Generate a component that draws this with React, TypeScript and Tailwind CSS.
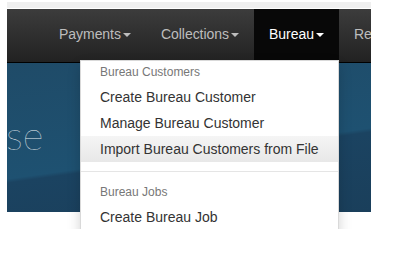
import React from 'react';

const navItems = [
  { label: 'Payments', caret: true, active: false },
  { label: 'Collections', caret: true, active: false },
  { label: 'Bureau', caret: true, active: true },
  { label: 'Reports', caret: true, active: false },
];

type MenuRow =
  | { kind: 'header'; text: string }
  | { kind: 'item'; text: string; hover?: boolean }
  | { kind: 'divider' };

const bureauMenu: MenuRow[] = [
  { kind: 'header', text: 'Bureau Customers' },
  { kind: 'item', text: 'Create Bureau Customer' },
  { kind: 'item', text: 'Manage Bureau Customer' },
  { kind: 'item', text: 'Import Bureau Customers from File', hover: true },
  { kind: 'divider' },
  { kind: 'header', text: 'Bureau Jobs' },
  { kind: 'item', text: 'Create Bureau Job' },
  { kind: 'item', text: 'Manage Bureau Jobs' },
];

function Caret() {
  return (
    <span className="ml-[2px] inline-block h-0 w-0 border-x-[4px] border-t-[4px] border-x-transparent border-t-current align-middle" />
  );
}

export default function App() {
  return (
    <div className="h-[257px] w-[395px] bg-white pl-[7px] pt-[2px] font-['Liberation_Sans',Arial,sans-serif]">
      <div className="relative h-[227px] w-[364px] overflow-hidden">
        {/* strip of the header above, mostly scrolled away */}
        <div className="h-[6px] bg-[#efefef]" />
        <div className="h-px bg-white" />

        <nav className="flex h-[54px] border-b border-black bg-gradient-to-b from-[#3c3c3c] to-[#222222] pl-[37px]">
          {navItems.map((item) => (
            <div
              key={item.label}
              className={
                'flex h-full shrink-0 items-center whitespace-nowrap px-[15px] pb-[2px] text-[14px] tracking-[-0.04px] ' +
                (item.active ? 'bg-[#080808] text-white' : 'text-[#bdbdbd]')
              }
            >
              {item.label}
              {item.caret && <Caret />}
            </div>
          ))}
        </nav>

        <div className="h-[149px] overflow-hidden bg-[linear-gradient(172deg,#1f4b68_0%,#1e5171_58%,#1b4361_60%,#1a3f5b_100%)] pt-[52px]">
          <div className="-ml-[1px] font-['Lato',sans-serif] text-[40px] font-[200] leading-[40px] text-[#e8eef2]">
            se
          </div>
        </div>

        {/* open Bureau dropdown */}
        <div className="absolute left-[73px] top-[58px] w-[259px] border border-[rgba(0,0,0,0.15)] bg-white shadow-[0_6px_12px_rgba(0,0,0,0.175)]">
          {bureauMenu.map((row, i) => {
            if (row.kind === 'divider') {
              return <div key={i} className="my-[9px] h-px bg-[#e5e5e5]" />;
            }
            if (row.kind === 'header') {
              return (
                <div key={i} className="px-[19px] py-[3px] text-[12px] leading-[17px] text-[#777777]">
                  {row.text}
                </div>
              );
            }
            return (
              <div
                key={i}
                className={
                  'whitespace-nowrap px-[19px] py-[3px] text-[14px] leading-[20px] text-[#333333] ' +
                  (row.hover ? 'bg-gradient-to-b from-[#f5f5f5] to-[#e8e8e8]' : '')
                }
              >
                {row.text}
              </div>
            );
          })}
        </div>
      </div>
    </div>
  );
}
